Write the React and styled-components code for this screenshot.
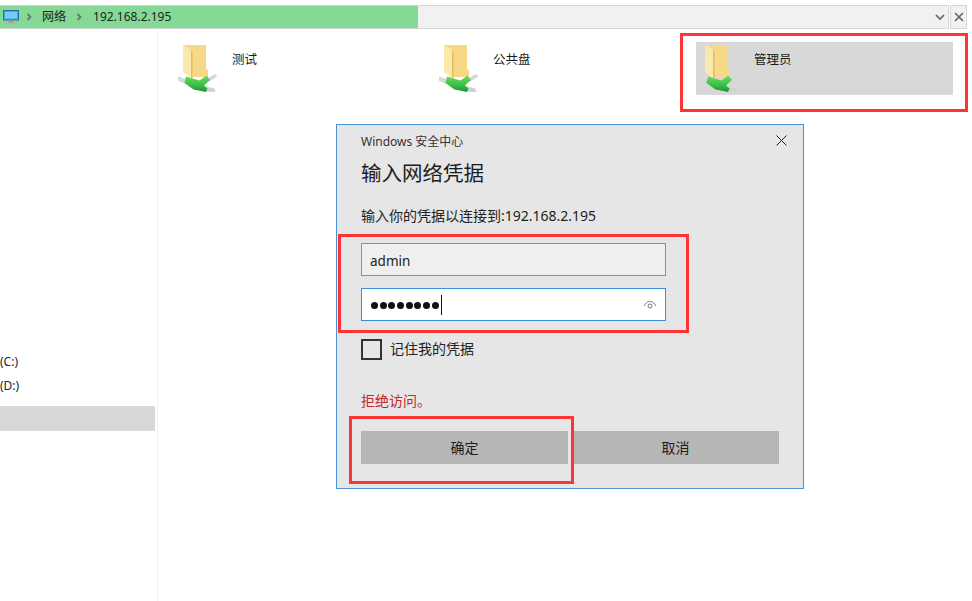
import React from "react";
import styled, { createGlobalStyle } from "styled-components";

const Global = createGlobalStyle`
  html, body { margin: 0; padding: 0; background: #fff; }
  body { font-family: "Noto Sans", "Noto Sans CJK SC", sans-serif; color: #222; }
  * { box-sizing: border-box; }
`;
const Page = styled.div`
  position: relative;
  width: 972px;
  height: 601px;
  overflow: hidden;
  background: #fff;
  display: flex;
  flex-direction: column;
  padding-top: 5px;
`;
const TopBar = styled.div`
  display: flex;
  height: 24px;
  gap: 1px;
  margin-right: 5px;
`;
const Address = styled.div`
  flex: 1;
  display: flex;
  background: #f1f1f1;
  border: 1px solid #d6d6d6;
  border-left: none;
  position: relative;
`;
const Crumbs = styled.div`
  width: 418px;
  margin: -1px 0;
  background: #85d895;
  display: flex;
  align-items: center;
  font-size: 12px;
  color: #1a261d;
  border-top: 1px solid #c9d6cb;
  border-bottom: 1px solid #c9d6cb;
  padding-left: 3px;
`;
const Crumb = styled.span`
  line-height: 1;
`;
const Sep = styled.span`
  width: 16px;
  margin: ${p => p.$m || "0"};
  display: flex;
  justify-content: center;
`;
const Spacer = styled.div`
  flex: 1;
`;
const Chevron = styled.div`
  width: 17px;
  display: flex;
  align-items: center;
  justify-content: center;
`;
const CloseBtn = styled.div`
  width: 17px;
  background: #f1f1f1;
  border: 1px solid #d6d6d6;
  display: flex;
  align-items: center;
  justify-content: center;
`;
const Body = styled.div`
  flex: 1;
  display: flex;
`;
const Sidebar = styled.aside`
  width: 158px;
  border-right: 1px solid #f2f2f2;
  padding-top: 320px;
  padding-right: 2px;
  display: flex;
  flex-direction: column;
  font-size: 12px;
`;
const DriveRow = styled.div`
  height: 24px;
  display: flex;
  align-items: center;
  color: #222;
`;
const SideSelected = styled.div`
  height: 25px;
  margin-top: 9px;
  background: #d8d8d8;
`;
const Content = styled.main`
  flex: 1;
  padding: 13px 0 0 16px;
  display: grid;
  grid-template-columns: repeat(3, 257px);
  column-gap: 4px;
  align-content: start;
`;
const Item = styled.div`
  height: 53px;
  display: flex;
  background: ${p => (p.$selected ? "#d8d8d8" : "transparent")};
  padding-left: 4px;
`;
const ItemIcon = styled.svg`
  width: 40px;
  height: 50px;
  flex: none;
`;
const ItemLabel = styled.div`
  margin-left: 14px;
  margin-top: 9px;
  font-size: 12.5px;
  line-height: 18px;
  color: #1a1a1a;
`;
const Dialog = styled.section`
  position: absolute;
  left: 336px;
  top: 124px;
  width: 468px;
  height: 365px;
  background: #e6e6e6;
  border: 1px solid #4a94d6;
  padding: 7px 24px 0;
  display: flex;
  flex-direction: column;
`;
const DialogHead = styled.div`
  display: flex;
  align-items: center;
  justify-content: space-between;
  height: 17px;
  font-size: 12px;
  color: #333;
`;
const DialogClose = styled.div`
  display: flex;
  margin-right: -8px;
`;
const Title = styled.h1`
  margin: 10px 0 0;
  font-size: 20.5px;
  line-height: 28px;
  font-weight: 400;
  color: #1c1c1c;
`;
const Prompt = styled.p`
  margin: 20px 0 0;
  font-size: 14px;
  line-height: 18px;
  color: #222;
`;
const Field = styled.div`
  width: 305px;
  height: 33px;
  display: flex;
  align-items: center;
  justify-content: space-between;
  padding: ${p => (p.$focus ? "0" : "2px")} 8px 0;
  margin-top: ${p => p.$mt}px;
  border: 1px solid ${p => (p.$focus ? "#3a8fdc" : "#8f8f8f")};
  background: ${p => (p.$focus ? "#fff" : "#efefef")};
  font-size: 13.5px;
  color: #222;
`;
const Dots = styled.div`
  display: flex;
  align-items: center;
  gap: 1.7px;
  margin-left: 1px;
`;
const Dot = styled.i`
  width: 7px;
  height: 7px;
  border-radius: 50%;
  background: #111;
  position: relative;
  top: 1px;
`;
const Caret = styled.i`
  width: 1px;
  height: 20px;
  background: #111;
`;
const CheckRow = styled.div`
  display: flex;
  gap: 8px;
  margin-top: 18px;
  font-size: 14px;
  line-height: 20px;
  color: #222;
`;
const Box = styled.div`
  width: 21px;
  height: 21px;
  border: 2px solid #333;
`;
const ErrorText = styled.div`
  margin-top: 32px;
  font-size: 14px;
  line-height: 18px;
  color: #c62828;
`;
const Actions = styled.div`
  display: grid;
  grid-template-columns: 207px 207px;
  column-gap: 4px;
  margin-top: 21px;
`;
const Btn = styled.button`
  height: 33px;
  border: none;
  padding: 0 0 2px;
  background: #b6b6b6;
  font: 14px "Noto Sans", "Noto Sans CJK SC", sans-serif;
  color: #1c1c1c;
`;
const Mark = styled.div`
  position: absolute;
  left: ${p => p.$x}px;
  top: ${p => p.$y}px;
  width: ${p => p.$w}px;
  height: ${p => p.$h}px;
  border: 3px solid #ff3535;
  pointer-events: none;
`;

function ShareFolder() {
  return (
    <ItemIcon viewBox="0 0 40 50">
      <defs>
        <linearGradient id="pipeFill" x1="0" y1="0" x2="0" y2="1">
          <stop offset="0" stopColor="#6fdc62" />
          <stop offset="0.55" stopColor="#3cc04a" />
          <stop offset="1" stopColor="#1c9438" />
        </linearGradient>
      </defs>
      <path d="M5 3H28V27L30 28V35H14L5 30Z" fill="#f6d886" />
      <path d="M5 3L13 8V36L5 30Z" fill="#fbe9ac" />
      <path d="M13 8L14.500 10V36H13Z" fill="#e3bd60" />
      <path d="M1 37L9 40" stroke="#d3d8d3" strokeWidth="4.500" strokeLinecap="round" />
      <path d="M30 38L37 34" stroke="#d3d8d3" strokeWidth="3.500" strokeLinecap="round" />
      <path d="M27 46.500L35 48.500" stroke="#cfd3cf" strokeWidth="4.500" strokeLinecap="round" />
      <path d="M8 34.500L21.500 38.500L28.500 33.500L32 38L26 43.500L29.500 46.500L28 50L15.500 47.500L6.500 41Z" fill="url(#pipeFill)" />
    </ItemIcon>
  );
}

const Arrow = () => (
  <svg width="6" height="8" viewBox="0 0 6 8"><path d="M1.500 1L4.500 4L1.500 7" fill="none" stroke="#5f7d66" strokeWidth="1.800" /></svg>
);

export default function App() {
  return (
    <Page>
      <Global />
      <TopBar>
        <Address>
          <Crumbs>
            <svg width="16" height="14" viewBox="0 0 16 14">
              <rect x="0.500" y="0.500" width="15" height="9.500" fill="#3aa9ea" stroke="#2a6f9f" />
              <rect x="2" y="2" width="12" height="6.500" fill="#74cdf6" />
              <rect x="6" y="10" width="4" height="2" fill="#8a9a90" />
              <rect x="2" y="12" width="12" height="1.500" fill="#a7b0a9" />
            </svg>
            <Sep $m="0 5px 0 2px"><Arrow /></Sep>
            <Crumb>网络</Crumb>
            <Sep $m="0 6px 0 5px"><Arrow /></Sep>
            <Crumb>192.168.2.195</Crumb>
          </Crumbs>
          <Spacer />
          <Chevron>
            <svg width="10" height="7" viewBox="0 0 10 7"><path d="M1 1L5 5L9 1" fill="none" stroke="#666" strokeWidth="1.700" /></svg>
          </Chevron>
        </Address>
        <CloseBtn>
          <svg width="10" height="10" viewBox="0 0 10 10"><path d="M1 1L9 9M9 1L1 9" stroke="#666" strokeWidth="1.700" /></svg>
        </CloseBtn>
      </TopBar>
      <Body>
        <Sidebar>
          <DriveRow>(C:)</DriveRow>
          <DriveRow>(D:)</DriveRow>
          <SideSelected />
        </Sidebar>
        <Content>
          <Item><ShareFolder /><ItemLabel>测试</ItemLabel></Item>
          <Item><ShareFolder /><ItemLabel>公共盘</ItemLabel></Item>
          <Item $selected><ShareFolder /><ItemLabel>管理员</ItemLabel></Item>
        </Content>
      </Body>
      <Dialog>
        <DialogHead>
          <span>Windows 安全中心</span>
          <DialogClose>
            <svg width="11" height="11" viewBox="0 0 11 11"><path d="M0.500 0.500L10.500 10.500M10.500 0.500L0.500 10.500" stroke="#222" strokeWidth="1" /></svg>
          </DialogClose>
        </DialogHead>
        <Title>输入网络凭据</Title>
        <Prompt>输入你的凭据以连接到:192.168.2.195</Prompt>
        <Field $mt={18}>admin</Field>
        <Field $mt={12} $focus>
          <Dots>
            {Array.from({ length: 8 }, (_, i) => <Dot key={i} />)}
            <Caret />
          </Dots>
          <svg width="14" height="10" viewBox="0 0 14 10">
            <path d="M1 6C3 2.500 5 1.500 7 1.500S11 2.500 13 6" fill="none" stroke="#777" strokeWidth="1" />
            <circle cx="7" cy="6" r="2" fill="none" stroke="#777" strokeWidth="1" />
          </svg>
        </Field>
        <CheckRow><Box />记住我的凭据</CheckRow>
        <ErrorText>拒绝访问。</ErrorText>
        <Actions>
          <Btn>确定</Btn>
          <Btn>取消</Btn>
        </Actions>
      </Dialog>
      <Mark $x={680} $y={33} $w={288} $h={79} />
      <Mark $x={338} $y={234} $w={351} $h={99} />
      <Mark $x={349} $y={416} $w={225} $h={68} />
    </Page>
  );
}
